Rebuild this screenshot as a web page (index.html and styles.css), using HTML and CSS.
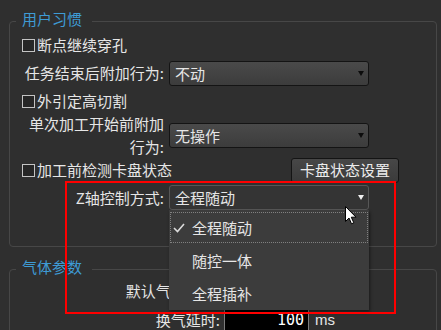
FILE: index.html
```html
<!DOCTYPE html>
<html lang="zh-CN">
<head>
  <meta charset="UTF-8" />
  <title>用户习惯</title>
  <link rel="stylesheet" href="styles.css">
</head>
<body>
  <fieldset class="group habits">
    <legend>用户习惯</legend>
    <label class="check first"><span class="box"></span>断点继续穿孔</label>
    <div class="field tall">
      <span class="name">任务结束后附加行为:</span>
      <div class="combo">不动<i class="arrow"></i></div>
    </div>
    <label class="check"><span class="box"></span>外引定高切割</label>
    <div class="field two-line">
      <span class="name">单次加工开始前附加<br>行为:</span>
      <div class="combo">无操作<i class="arrow"></i></div>
    </div>
    <div class="check-row">
      <label class="check"><span class="box"></span>加工前检测卡盘状态</label>
      <button class="btn">卡盘状态设置</button>
    </div>
    <div class="field z-row">
      <span class="name">Z轴控制方式:</span>
      <div class="combo-wrap">
        <div class="combo open">全程随动<i class="arrow"></i></div>
        <ul class="popup">
          <li class="current">
            <svg class="tick" width="12" height="10" viewBox="0 0 12 10"><polyline points="1,5 4.5,8.5 11,1" fill="none" stroke="#dcdcdc" stroke-width="1.6"/></svg>
            全程随动
          </li>
          <li>随控一体</li>
          <li>全程插补</li>
        </ul>
      </div>
    </div>
  </fieldset>

  <fieldset class="group gas">
    <legend>气体参数</legend>
    <div class="gas-row">
      <span class="gas-name">默认气体压力:</span>
    </div>
    <div class="gas-row delay">
      <span class="gas-name">换气延时:</span>
      <span class="num">100</span>
      <span class="unit">ms</span>
    </div>
  </fieldset>

  <div class="highlight"></div>

  <svg class="cursor" width="12" height="19" viewBox="0 0 12 19">
    <path d="M0.5 0.5 L0.5 15.5 L4 12 L6.5 17.8 L8.8 16.8 L6.3 11.2 L11 11.2 Z" fill="#fff" stroke="#000" stroke-width="1"/>
  </svg>
</body>
</html>
```

FILE: styles.css
```css
* {
  box-sizing: border-box;
}
html, body {
  margin: 0;
}
body {
  position: relative;
  width: 441px;
  height: 330px;
  overflow: hidden;
  background: #2f2f2f;
  color: #e6e6e6;
  font-family: "Noto Sans CJK SC", "Liberation Sans", sans-serif;
  font-size: 15px;
  line-height: 18px;
}
.group {
  margin: 11px 4px 0 9px;
  padding: 0 0 31px;
  border: 1px solid #474747;
  border-radius: 4px;
  min-width: 0;
}
.group legend {
  margin-left: 6px;
  padding: 0 10px 4px 6px;
  color: #3e9bd5;
  line-height: 16px;
}

/* checkbox rows */
.check {
  display: flex;
  align-items: center;
  height: 18px;
  padding-left: 12px;
}
.check.first {
  margin-top: 5px;
}
.box {
  width: 13px;
  height: 13px;
  margin-right: 2px;
  border: 1px solid #c4c4c4;
  background: #262626;
}
.check-row {
  display: flex;
  align-items: center;
  justify-content: space-between;
  height: 20px;
}
.btn {
  width: 108px;
  height: 25px;
  margin-right: 37px;
  padding: 0;
  border: 1px solid #141414;
  border-radius: 3px;
  background: linear-gradient(#474747, #3b3b3b);
  color: #ececec;
  font: inherit;
}

/* label + combo rows */
.field {
  display: flex;
  align-items: center;
}
.field.tall {
  height: 38px;
}
.field.two-line {
  height: 50px;
}
.field.z-row {
  height: 35px;
}
.name {
  width: 154px;
  text-align: right;
}
.two-line .name {
  line-height: 23px;
}
.combo-wrap {
  position: relative;
  margin-left: 5px;
}
.combo {
  position: relative;
  width: 200px;
  height: 25px;
  padding-left: 5px;
  border: 1px solid #141414;
  border-radius: 3px;
  background: linear-gradient(#4a4a4a, #3c3c3c);
  line-height: 23px;
}
.field > .combo {
  margin-left: 5px;
}
.combo.open {
  border-color: #575757;
  background: #343434;
}
.arrow {
  position: absolute;
  right: 4px;
  top: 9px;
  border-left: 3.5px solid transparent;
  border-right: 3.5px solid transparent;
  border-top: 5px solid #0c0c0c;
}
.open .arrow {
  border-top-color: #f0f0f0;
}

/* drop-down list */
.popup {
  position: absolute;
  left: 0;
  top: 25px;
  width: 200px;
  margin: 0;
  padding: 1px 0 0;
  list-style: none;
  background: #3c3c3c;
  box-shadow: 1px 2px 3px rgba(0, 0, 0, 0.45);
  z-index: 2;
}
.popup li {
  position: relative;
  height: 33px;
  padding-left: 23px;
  line-height: 33px;
}
.popup li.current {
  outline: 1px dotted #808080;
  outline-offset: -2px;
}
.tick {
  position: absolute;
  left: 4px;
  top: 12px;
}

/* gas group */
.gas {
  margin-top: 12px;
}
.gas-row {
  display: flex;
  align-items: center;
  height: 24px;
}
.gas-name {
  width: 210px;
  text-align: right;
}
.gas-row.delay {
  margin-top: 6px;
  height: 22px;
}
.num {
  width: 85px;
  height: 22px;
  margin-left: 4px;
  padding-right: 4px;
  border: 1px solid #7c7c7c;
  background: #000;
  color: #fff;
  font-family: "DejaVu Sans Mono", monospace;
  line-height: 20px;
  text-align: right;
}
.unit {
  margin-left: 6px;
  font-family: "Liberation Sans", sans-serif;
}

/* annotation overlays */
.highlight {
  position: absolute;
  left: 65px;
  top: 181px;
  width: 331px;
  height: 133px;
  border: 2px solid #ff0000;
  z-index: 3;
}
.cursor {
  position: absolute;
  left: 345px;
  top: 206px;
  z-index: 4;
}
```
